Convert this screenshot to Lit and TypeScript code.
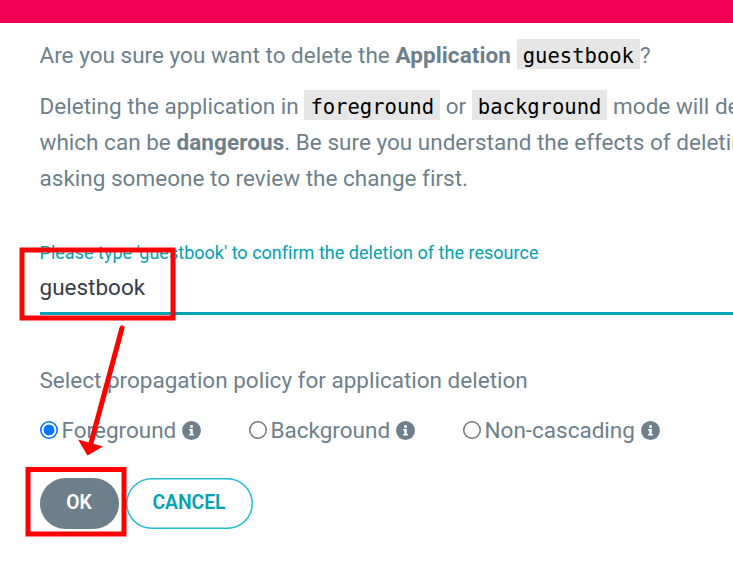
import { LitElement, html, css, svg } from "lit";
import { customElement, state } from "lit/decorators.js";

const infoIcon = svg`<circle cx="9.5" cy="9.5" r="9.4" fill="#6d7f8b"></circle>
  <path d="M8.2 4.3h2.7v2.5H8.2zM7.2 8.1h3.6v4.9h1.1v1.4H7.1V13h1.2V9.6H7.2z" fill="#fff"></path>`;

@customElement("app-root")
export class AppRoot extends LitElement {
  @state() private policy = "Foreground";

  static styles = css`
    :host {
      display: block;
      position: relative;
      height: 563px;
      overflow: hidden;
      background: #fff;
      color: #6d7f8b;
      font: 22.5px/36px Roboto, sans-serif;
      white-space: nowrap;
    }
    .bar { height: 23px; background: #f10054; }
    .body { padding: 13.5px 0 0 39.5px; }
    p { margin: 0 0 15px; letter-spacing: 0.015px; }
    b { font-weight: 700; letter-spacing: 0.09px; }
    code {
      font: 20.55px/24px "DejaVu Sans Mono", monospace;
      letter-spacing: 0;
      background: #e6e6e6;
      color: #000;
      padding: 5px 6px 1px;
    }
    .field { margin-top: 45px; border-bottom: 3px solid #00a2b3; height: 71px; }
    .field label { display: block; font-size: 18px; line-height: 24px; color: #00a2b3; letter-spacing: 0.02px; }
    .value { color: #363c4a; line-height: 36px; margin-top: 4px; }
    .question { margin-top: 47.5px; }
    .options { display: flex; margin-top: 14px; }
    .option { display: flex; align-items: center; height: 36px; }
    .option.first { width: 209px; }
    .option.second { width: 214px; }
    .radio {
      width: 18px;
      height: 18px;
      box-shadow: inset 0 0 0 1.5px #767676;
      border-radius: 50%;
      margin-right: 4px;
    }
    .radio.on {
      box-shadow: inset 0 0 0 1.6px #0075ff;
      background: radial-gradient(circle, #0075ff 5px, #fff 5.8px);
    }
    .info { width: 19px; height: 19px; margin-left: 6px; }
    .actions { display: flex; gap: 7px; margin-top: 29.5px; }
    button {
      height: 51px;
      border-radius: 25.5px;
      border: 0;
      box-shadow: inset 0 0 0 1.5px #1fbdd0;
      background: #fff;
      color: #00a2b3;
      font: 600 19.3px/49px Roboto, sans-serif;
      padding: 0 0 2px;
      width: 127px;
    }
    button.ok { width: 79px; box-shadow: none; background: #6d7f8b; color: #fff; }
    .marks { position: absolute; left: 0; top: 0; pointer-events: none; }
  `;

  private option(name: string, pos: string) {
    return html`<div class="option ${pos}" @click=${() => (this.policy = name)}>
      <span class="radio ${this.policy === name ? "on" : ""}"></span><span>${name}</span>
      <svg class="info" viewBox="0 0 19 19">${infoIcon}</svg>
    </div>`;
  }

  render() {
    return html`
      <div class="bar"></div>
      <div class="body">
        <p>Are you sure you want to delete the <b>Application</b> <code>guestbook</code>?</p>
        <p>Deleting the application in <code>foreground</code> or <code>background</code> mode will delete<br />which can be <b>dangerous</b>. Be sure you understand the effects of deleting<br />asking someone to review the change first.</p>
        <div class="field">
          <label>Please type 'guestbook' to confirm the deletion of the resource</label>
          <div class="value">guestbook</div>
        </div>
        <div class="question">Select propagation policy for application deletion</div>
        <div class="options">
          ${this.option("Foreground", "first")}${this.option("Background", "second")}${this.option("Non-cascading", "third")}
        </div>
        <div class="actions"><button class="ok">OK</button><button>CANCEL</button></div>
      </div>
      <svg class="marks" width="733" height="563" viewBox="0 0 733 563">
        <g fill="none" stroke="#f00" stroke-width="5">
          <rect x="22" y="250" width="151" height="68"></rect>
          <rect x="28" y="469.5" width="96" height="64.5"></rect>
          <path d="M122 328 91 443" stroke-linecap="round"></path>
        </g>
        <path d="M78 439.5 103 446.5 87.5 455.5z" fill="#f00"></path>
      </svg>`;
  }
}
